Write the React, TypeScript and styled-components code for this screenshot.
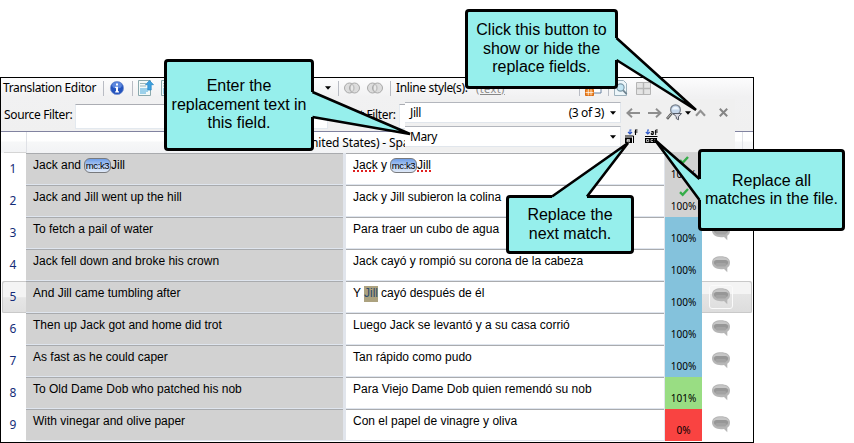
import React from "react";
import styled, { createGlobalStyle } from "styled-components";

const Global = createGlobalStyle`
  html, body { margin: 0; background: #fff; overflow: hidden; }
  * { box-sizing: border-box; }
`;

const ui = `"Noto Sans", "Open Sans", sans-serif`;
const body = `"Liberation Sans", Arial, sans-serif`;

const Stage = styled.main`
  position: relative;
  width: 854px;
  height: 443px;
  padding-top: 77px;
  overflow: hidden;
  font-family: ${ui};
  color: #000;
`;

const Editor = styled.section`
  position: relative;
  width: 754px;
  height: 366px;
  border: 1px solid #000;
  display: flex;
  flex-direction: column;
  background: #fff;
`;

const Chrome = styled.div`
  height: 53px;
  flex: none;
  background: linear-gradient(#fcfcfd, #f1f1f2 35%, #f0f0f0);
`;

const Toolbar = styled.div`
  display: flex;
  align-items: center;
  height: 20px;
`;

const Label = styled.span<{ $width: number }>`
  width: ${(p) => p.$width}px;
  flex: none;
  font-size: 12px;
  line-height: 18px;
  letter-spacing: -0.35px;
  white-space: nowrap;
`;

const Divider = styled.i<{ $before?: number; $after?: number }>`
  flex: none;
  width: 1px;
  height: 15px;
  margin: 0 ${(p) => p.$after ?? 0}px 0 ${(p) => p.$before ?? 0}px;
  background: #b9bcc4;
`;

const Gap = styled.span<{ $width: number }>`
  flex: none;
  width: ${(p) => p.$width}px;
`;

const StyleSample = styled.span`
  width: 28px;
  font-size: 11px;
  line-height: 13px;
  color: #888;
  text-decoration: underline;
  letter-spacing: 0.4px;
`;

const Icon = styled.svg`
  display: block;
  flex: none;
  overflow: visible;
`;

const FilterBar = styled.div`
  display: flex;
  align-items: center;
  height: 33px;
  padding: 0 0 0 3px;
`;

const FilterInput = styled.div<{ $width: number }>`
  flex: none;
  width: ${(p) => p.$width}px;
  height: 25px;
  margin-top: 3px;
  border: 1px solid #e3e9ef;
  border-top-color: #abadb3;
  background: #fff;
`;

const Header = styled.div`
  flex: none;
  display: grid;
  grid-template-columns: 25px 319px 319px 78px 1fr;
  height: 22px;
  border-top: 1px solid #8183a0;
  background: linear-gradient(#fff, #fff 40%, #f6f7f8 50%, #f2f3f5);
`;

const HeaderCell = styled.div`
  border-left: 1px solid #dfe1e6;
  border-bottom: 1px solid #d5d5d5;

  &:first-child {
    border-left: 0;
    margin-left: 3px;
  }
`;

const HeaderTitle = styled.div`
  grid-column: 2 / 4;
  padding: 2px 0 0 272px;
  border-left: 1px solid #dfe1e6;
  font-size: 12px;
  line-height: 18px;
  letter-spacing: -0.15px;
  white-space: nowrap;
`;

const Row = styled.div`
  flex: none;
  display: grid;
  grid-template-columns: 25px 317px 3px 318px 1px 37px 1fr;
  height: 32px;
`;

const RowNumber = styled.div<{ $active?: boolean }>`
  display: flex;
  align-items: center;
  justify-content: center;
  margin: 0 0 0 1px;
  padding: 0 2px 1px 0;
  font-size: 12px;
  color: #142c78;
  background: ${(p) => (p.$active ? "linear-gradient(#f4f4f4 50%, #e6e6e6 52%, #dfdfdf)" : "#fff")};
  box-shadow: ${(p) => (p.$active ? "inset 1px 1px #c9c9c9, inset 0 -1px #c9c9c9" : "none")};
  border-radius: 2px 0 0 2px;
`;

const TextCell = styled.div<{ $shade?: boolean }>`
  padding: 4px 0 0 7px;
  border-top: 1px solid #a9abae;
  border-bottom: 1px solid #dfe5ee;
  background: ${(p) => (p.$shade ? "#d2d2d2" : "#fff")};
  font: 12px/14px ${body};
  white-space: nowrap;
  display: flex;
  align-items: flex-start;
`;

const Gutter = styled.div`
  background: #e1e5ec;
`;

const Score = styled.div<{ $color: string }>`
  display: flex;
  flex-direction: column;
  align-items: center;
  justify-content: flex-end;
  gap: 3px;
  padding-bottom: 4px;
  background: ${(p) => p.$color};
  font-size: 10px;
  line-height: 14px;
`;

const CommentCell = styled.div<{ $active?: boolean }>`
  padding: 4px 0 0 7px;
  margin-right: 1px;
  background: ${(p) => (p.$active ? "linear-gradient(#f4f4f4 40%, #e5e5e5 42%, #dcdcdc)" : "#fff")};
  box-shadow: ${(p) => (p.$active ? "inset -1px 1px #c9c9c9, inset 0 -1px #c9c9c9" : "none")};
  border-radius: 0 2px 2px 0;
`;

const CommentFrame = styled.div<{ $active?: boolean }>`
  width: 24px;
  height: 24px;
  padding: 2px;
  border: 1px solid ${(p) => (p.$active ? "#fafafa" : "transparent")};
  border-radius: 3px;
`;

const Tag = styled.span`
  flex: none;
  width: 27px;
  height: 15px;
  margin: 0 0 0 3px;
  border: 1.5px solid #77797d;
  border-radius: 6px;
  background: linear-gradient(#6f9fe8, #bcd2f4 60%, #dfe9f8);
  font: 9.5px/13px ${body};
  letter-spacing: -0.4px;
  text-align: center;
`;

const Misspelled = styled.span`
  text-decoration: underline dotted #e02020 1.5px;
  text-underline-offset: 1px;
`;

const Hit = styled.mark`
  background: #aca27f;
  color: #2d4a6b;
  padding: 0;
  margin: 0 3px;
  height: 16px;
`;

const FindPanel = styled.div`
  position: absolute;
  left: 404px;
  top: 21px;
  width: 330px;
  height: 53px;
  padding: 3px 0 0 0;
  display: grid;
  grid-template-columns: 216px 1fr;
  grid-template-rows: 21px 21px;
  row-gap: 3px;
  background: #f0f0f0;
`;

const Combo = styled.div`
  display: flex;
  align-items: center;
  justify-content: space-between;
  padding: 0 4px 0 5px;
  border: 1px solid #e1e6ec;
  border-top-color: #b3b6bd;
  border-left-width: 0;
  background: #fff;
  font-size: 12px;
  line-height: 18px;
  letter-spacing: -0.4px;
`;

const ComboEnd = styled.span`
  display: flex;
  align-items: center;
  gap: 6px;
`;

const Tools = styled.div`
  display: flex;
  align-items: center;
`;

const Callout = styled.div<{ $x: number; $y: number; $w: number; $h: number }>`
  position: absolute;
  left: ${(p) => p.$x}px;
  top: ${(p) => p.$y}px;
  width: ${(p) => p.$w}px;
  height: ${(p) => p.$h}px;
  display: flex;
  flex-direction: column;
  align-items: center;
  justify-content: center;
  border: 3px solid #000;
  border-radius: 4px;
  background: #96efec;
  font: 16px/18.5px ${body};
  letter-spacing: -0.02px;
  white-space: nowrap;
`;

const Tails = styled.svg`
  position: absolute;
  left: 0;
  top: 0;
  pointer-events: none;
`;

const Caret = () => (
  <Icon width="6" height="4" viewBox="0 0 6 4"><path d="M0 .3h6L3 3.7z" fill="#000" /></Icon>
);

const Info = () => (
  <Icon width="14" height="14" viewBox="0 0 14 14">
    <circle cx="7" cy="7" r="6.6" fill="#2453bd" stroke="#7a94cf" strokeWidth=".8" />
    <ellipse cx="7" cy="4.2" rx="4.8" ry="3.2" fill="#5c87de" />
    <path d="M6 2.5h2v2H6zM5.2 5.7H8v4.6h1v1.2H5.2v-1.2H6V7h-.8z" fill="#fff" />
  </Icon>
);

const ExportPage = () => (
  <Icon width="16" height="16" viewBox="0 0 16 16">
    <path d="M.5 .5h12v15H.5z" fill="#f3faf9" stroke="#8ba9ad" />
    <path d="M2 3.5h6M2 6h6" stroke="#9bb7bb" />
    <path d="M2 9h8M2 11h8M2 13h6" stroke="#45a7dc" />
    <path d="M11.5 .5l4 4.2h-2.3V10h-3.4V4.7H7.5z" fill="#3da0de" stroke="#2785c4" strokeWidth=".7" />
  </Icon>
);

const Rings = () => (
  <Icon width="16" height="12" viewBox="0 0 16 12">
    <g fill="#d6d6d6" fillOpacity=".8" stroke="#a9a9a9">
      <circle cx="5.5" cy="6" r="5" /><circle cx="10.5" cy="6" r="5" />
    </g>
    <path d="M8 2.2a5 5 0 0 1 0 7.6 5 5 0 0 1 0-7.6" fill="#e9e9e9" stroke="#aaa" strokeWidth=".6" />
  </Icon>
);

const OrangePage = () => (
  <Icon width="17" height="16" viewBox="0 0 17 16">
    <path d="M5 1h11v12H5z" fill="#fff" stroke="#6780a0" />
    <path d="M.5 9.5h8v6h-8z" fill="#ef8a2d" stroke="#d96b13" />
    <path d="M.5 12.5h8M3.3 9v6.5M6 9v6.5" stroke="#fff" strokeWidth=".7" />
  </Icon>
);

const Preview = () => (
  <Icon width="14" height="16" viewBox="0 0 14 16">
    <path d="M.5 .5h9l3 3v12H.5z" fill="#edf6fa" stroke="#9db1bc" />
    <circle cx="6.5" cy="7.5" r="3.6" fill="#c2e6f4" stroke="#7895a5" strokeWidth="1.1" />
    <path d="M9.2 10.4l3.5 3.7" stroke="#6e8390" strokeWidth="1.7" />
  </Icon>
);

const GridIcon = () => (
  <Icon width="15" height="13" viewBox="0 0 15 13">
    <path d="M.5 .5h14v12H.5z" fill="#e4e4e4" stroke="#b5b5b5" />
    <path d="M7.5 .5v12M.5 6.5h14" stroke="#b5b5b5" strokeWidth="1.4" />
  </Icon>
);

const Arrow = ({ flip }: { flip?: boolean }) => (
  <Icon width="14" height="10" viewBox="0 0 14 10">
    <path d={flip ? "M0 5h12M8 .7L12.6 5 8 9.3" : "M14 5H2M6 .7L1.4 5 6 9.3"} fill="none" stroke="#8e8e8e" strokeWidth="1.9" />
  </Icon>
);

const SearchFilter = () => (
  <Icon width="17" height="17" viewBox="0 0 17 17">
    <path d="M5.5 9.5L1 14.8" stroke="#555" strokeWidth="2.6" />
    <path d="M5 10L1.2 14.4" stroke="#ddd" strokeWidth=".8" />
    <circle cx="9.5" cy="5.7" r="4.9" fill="#c3d5ea" stroke="#777f89" strokeWidth="1.2" />
    <path d="M6 5.5a3.6 3.6 0 0 1 7 0z" fill="#eef5fc" />
    <path d="M7 9.5h8.6l-3.1 3.2v3.1l-2.2-1.2v-1.9z" fill="#d9d9e2" stroke="#555a66" />
  </Icon>
);

const Chevron = () => (
  <Icon width="11" height="8" viewBox="0 0 11 8"><path d="M1 6.8l4.5-5 4.5 5" fill="none" stroke="#929292" strokeWidth="2.2" /></Icon>
);

const Close = () => (
  <Icon width="9" height="9" viewBox="0 0 9 9"><path d="M.8 .8l7.4 7.4M8.2 .8L.8 8.2" stroke="#858585" strokeWidth="2" /></Icon>
);

const ReplaceOne = () => (
  <Icon width="13" height="15" viewBox="0 0 13 15">
    <path d="M6.5 1H5v3.5M3 3l2 2 2-2" fill="none" stroke="#2e59c8" strokeWidth="1.1" />
    <path d="M10.5 6V1h2M9.5 3h3" fill="none" stroke="#000" strokeWidth="1.1" />
    <path d="M0 7h8.500v7" fill="none" stroke="#000" />
    <path d="M0 8.5h7V14H0z" fill="#000" />
    <path d="M2 10.5h2.5v2.3H2zM2 11.6h2" fill="none" stroke="#fff" strokeWidth=".7" />
  </Icon>
);

const ReplaceAll = () => (
  <Icon width="13" height="15" viewBox="0 0 13 15">
    <path d="M4 1H2.8v3.5M.8 3l2 2 2-2" fill="none" stroke="#2e59c8" strokeWidth="1.1" />
    <path d="M6.3 2.5h2v3h-2V4h2M10.7 6V1h2M9.8 3h3" fill="none" stroke="#000" />
    <path d="M0 7.5h12.5" stroke="#000" />
    <path d="M0 9h12v5H0z" fill="#000" />
    <path d="M1.5 10.5h2.2v2.2H1.5zM8 10.5H6v2h2M10 10v3" fill="none" stroke="#fff" strokeWidth=".7" />
  </Icon>
);

const Check = () => (
  <Icon width="10" height="8" viewBox="0 0 10 8"><path d="M1 4.2l2.7 2.6L9 1" fill="none" stroke="#35ad49" strokeWidth="2.4" /></Icon>
);

const Bubble = () => (
  <Icon width="18" height="17" viewBox="0 0 18 17">
    <path d="M9 .3c5 0 9 2 9 6.2 0 2.5-1 4.3-2.7 5.2v4.5l-3.3-3.2c-1 .2-2 .2-3 .2-5 0-9-2.4-9-6.7S4 .3 9 .3z" fill="#b6b6b6" />
    <path d="M9 1.2c4.3 0 7.2 1.3 7.8 3.6H1.2C1.8 2.5 4.7 1.2 9 1.2z" fill="#c6c6c6" />
    <rect x="2" y="4" width="14" height="5" rx="2.5" fill="#979797" />
    <rect x="3.5" y="7" width="11" height="3.5" rx="1.7" fill="#a3a3a3" />
  </Icon>
);

type Line = { source: React.ReactNode; target: React.ReactNode; score: string; color: string; checked?: boolean; active?: boolean };

const blue = "#84c2dc";
const grey = "#d2d2d2";

const lines: Line[] = [
  { source: <>Jack and<Tag>mc:k3</Tag>Jill</>, target: <><Misspelled>Jack</Misspelled>&nbsp;y<Tag>mc:k3</Tag><Misspelled>Jill</Misspelled></>, score: "100%", color: grey, checked: true },
  { source: "Jack and Jill went up the hill", target: "Jack y Jill subieron la colina", score: "100%", color: grey, checked: true },
  { source: "To fetch a pail of water", target: "Para traer un cubo de agua", score: "100%", color: blue },
  { source: "Jack fell down and broke his crown", target: "Jack cayó y rompió su corona de la cabeza", score: "100%", color: blue },
  { source: "And Jill came tumbling after", target: <>Y<Hit>Jill</Hit>cayó después de él</>, score: "100%", color: blue, active: true },
  { source: "Then up Jack got and home did trot", target: "Luego Jack se levantó y a su casa corrió", score: "100%", color: blue },
  { source: "As fast as he could caper", target: "Tan rápido como pudo", score: "100%", color: blue },
  { source: "To Old Dame Dob who patched his nob", target: "Para Viejo Dame Dob quien remendó su nob", score: "101%", color: "#99dd83" },
  { source: "With vinegar and olive paper", target: "Con el papel de vinagre y oliva", score: "0%", color: "#f94341" },
];

export default function App() {
  return (
    <Stage>
      <Global />
      <Editor>
        <Chrome>
          <Toolbar>
            <Gap $width={2} />
            <Label $width={100}>Translation Editor</Label>
            <Divider $after={6} />
            <Info />
            <Divider $before={8} $after={5} />
            <ExportPage />
            <Gap $width={7} />
            <ExportPage />
            <Gap $width={148} />
            <Caret />
            <Divider $before={7} $after={5} />
            <Rings />
            <Gap $width={7} />
            <Rings />
            <Divider $before={7} $after={5} />
            <Label $width={80}>Inline style(s):</Label>
            <StyleSample>(text)</StyleSample>
            <Divider $before={75} $after={5} />
            <OrangePage />
            <Divider $before={6} $after={5} />
            <Preview />
            <Gap $width={8} />
            <GridIcon />
          </Toolbar>
          <FilterBar>
            <Label $width={71}>Source Filter:</Label>
            <FilterInput $width={253} />
            <Gap $width={2} />
            <Label $width={69}>Target Filter:</Label>
            <FilterInput $width={200} />
          </FilterBar>
        </Chrome>
        <Header>
          <HeaderCell />
          <HeaderTitle>(United States) - Spa</HeaderTitle>
          <HeaderCell />
          <HeaderCell />
        </Header>
        {lines.map((line, i) => (
          <Row key={i}>
            <RowNumber $active={line.active}>{i + 1}</RowNumber>
            <TextCell $shade>{line.source}</TextCell>
            <Gutter />
            <TextCell>{line.target}</TextCell>
            <Gutter />
            <Score $color={line.color}>
              {line.checked && <Check />}
              {line.score}
            </Score>
            <CommentCell $active={line.active}>
              <CommentFrame $active={line.active}><Bubble /></CommentFrame>
            </CommentCell>
          </Row>
        ))}
        <FindPanel>
          <Combo>
            <span>Jill</span>
            <ComboEnd>(3 of 3)<Caret /></ComboEnd>
          </Combo>
          <Tools>
            <Gap $width={5} />
            <Arrow />
            <Gap $width={8} />
            <Arrow flip />
            <Gap $width={4} />
            <SearchFilter />
            <Gap $width={2} />
            <Caret />
            <Gap $width={4} />
            <Chevron />
            <Gap $width={13} />
            <Close />
          </Tools>
          <Combo>
            <span>Mary</span>
            <ComboEnd><Caret /></ComboEnd>
          </Combo>
          <Tools>
            <Gap $width={4} />
            <ReplaceOne />
            <Gap $width={7} />
            <ReplaceAll />
          </Tools>
        </FindPanel>
      </Editor>
      <Callout $x={164} $y={59} $w={150} $h={92}>
        <span>Enter the</span><span>replacement text in</span><span>this field.</span>
      </Callout>
      <Callout $x={465} $y={9} $w={153} $h={80}>
        <span>Click this button to</span><span>show or hide the</span><span>replace fields.</span>
      </Callout>
      <Callout $x={506} $y={195} $w={128} $h={59}>
        <span>Replace the</span><span>next match.</span>
      </Callout>
      <Callout $x={698} $y={149} $w={147} $h={82}>
        <span>Replace all</span><span>matches in the file.</span>
      </Callout>
      <Tails width="854" height="443" viewBox="0 0 854 443">
        <g fill="#96efec">
          <path d="M310.5 92h2L410 134L312.5 117h-2zM614.5 38h2L696 110L616.5 60h-2zM552 198.5v-2L628 143L587 196.5v2zM701.5 179h-2L655 140L699.5 200h2z" />
        </g>
        <g fill="none" stroke="#000" strokeWidth="2.6" strokeLinejoin="bevel">
          <path d="M312.5 92L410 134L312.5 117M616.5 38L696 110L616.5 60M552 196.5L628 143L587 196.5M699.5 179L655 140L699.5 200" />
        </g>
      </Tails>
    </Stage>
  );
}
